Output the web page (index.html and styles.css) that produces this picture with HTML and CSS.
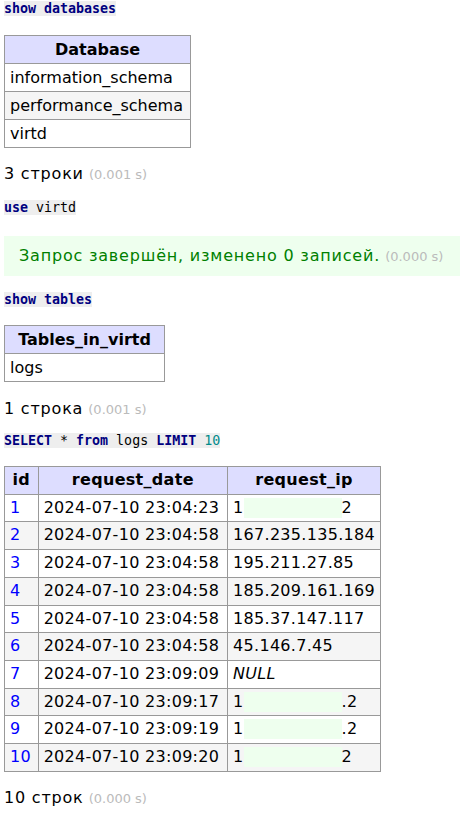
FILE: index.html
```html
<!DOCTYPE html>
<html lang="ru">
<head>
<meta charset="utf-8">
<title>Adminer SQL</title>
<link rel="stylesheet" href="styles.css">
</head>
<body>
<p class="sql first"><code><b class="kw">show</b> <b class="kw">databases</b></code></p>

<table class="grid t-db">
  <thead><tr><th>Database</th></tr></thead>
  <tbody>
    <tr><td>information_schema</td></tr>
    <tr class="odd"><td>performance_schema</td></tr>
    <tr><td>virtd</td></tr>
  </tbody>
</table>
<p class="count"><span class="ru">3 строки</span> <span class="time">(0.001 s)</span></p>

<p class="sql"><code><b class="kw">use</b> virtd</code></p>
<div class="message"><span class="ru">Запрос завершён, изменено 0 записей.</span> <span class="time">(0.000 s)</span></div>

<p class="sql"><code><b class="kw">show</b> <b class="kw">tables</b></code></p>
<table class="grid t-tables">
  <thead><tr><th>Tables_in_virtd</th></tr></thead>
  <tbody>
    <tr><td>logs</td></tr>
  </tbody>
</table>
<p class="count c2"><span class="ru">1 строка</span> <span class="time">(0.001 s)</span></p>

<p class="sql s3"><code><b class="kw">SELECT</b> * <b class="kw">from</b> logs <b class="kw">LIMIT</b> <span class="num">10</span></code></p>
<table class="grid t-logs">
  <thead><tr><th class="c-id">id</th><th class="c-date">request_date</th><th class="c-ip">request_ip</th></tr></thead>
  <tbody>
    <tr><td><a href="#">1</a></td><td>2024-07-10 23:04:23</td><td>1<span class="mask"></span>2</td></tr>
    <tr class="odd"><td><a href="#">2</a></td><td>2024-07-10 23:04:58</td><td>167.235.135.184</td></tr>
    <tr><td><a href="#">3</a></td><td>2024-07-10 23:04:58</td><td>195.211.27.85</td></tr>
    <tr class="odd"><td><a href="#">4</a></td><td>2024-07-10 23:04:58</td><td>185.209.161.169</td></tr>
    <tr><td><a href="#">5</a></td><td>2024-07-10 23:04:58</td><td>185.37.147.117</td></tr>
    <tr class="odd"><td><a href="#">6</a></td><td>2024-07-10 23:04:58</td><td>45.146.7.45</td></tr>
    <tr><td><a href="#">7</a></td><td>2024-07-10 23:09:09</td><td><i>NULL</i></td></tr>
    <tr class="odd"><td><a href="#">8</a></td><td>2024-07-10 23:09:17</td><td>1<span class="mask"></span>.2</td></tr>
    <tr><td><a href="#">9</a></td><td>2024-07-10 23:09:19</td><td>1<span class="mask"></span>.2</td></tr>
    <tr class="odd"><td><a href="#">10</a></td><td>2024-07-10 23:09:20</td><td>1<span class="mask"></span>2</td></tr>
  </tbody>
</table>
<p class="count"><span class="ru">10 строк</span> <span class="time">(0.000 s)</span></p>
</body>
</html>
```
FILE: styles.css
```css
html, body {
  margin: 0;
  background: #fff;
}
body {
  padding: 1px 0 0 4px;
  font-family: "DejaVu Sans", Verdana, sans-serif;
  font-size: 16px;
  line-height: 20px;
  color: #000;
}
.sql {
  margin: 16px 0 0;
  height: 15px;
}
.sql.first { margin-top: 0; }
.sql code {
  display: block;
  width: fit-content;
  font-family: "DejaVu Sans Mono", "Liberation Mono", monospace;
  font-size: 13.3px;
  line-height: 15px;
  background: #eee;
  color: #000;
}
.kw { color: #000080; font-weight: bold; }
.num { color: #008b8b; }

.grid {
  border-collapse: collapse;
  border: 1px solid #999;
  margin-top: 19px;
}
.grid th, .grid td {
  border: 1px solid #999;
  padding: 3px 5px;
  line-height: 21px;
  height: 21px;
  white-space: nowrap;
  text-align: left;
}
.grid th {
  background: #ddf;
  font-weight: bold;
  text-align: center;
}
.grid tr.odd td { background: #f5f5f5; }
.grid a { color: #00f; text-decoration: none; }
.grid i { font-style: italic; }

.t-db { width: 187px; }
.t-tables { width: 161px; margin-top: 18px; }
.t-logs { margin-top: 18px; width: 377px; letter-spacing: 0.3px; }
.t-logs th, .t-logs td { line-height: 20.7px; height: 20.7px; }
.c-id { width: 23px; }
.c-date { width: 179px; }
.c-ip { width: 141px; }

.mask {
  display: inline-block;
  width: 98px;
  height: 20px;
  vertical-align: -5px;
  background: #efe;
}

.ru { letter-spacing: 0.8px; }
.count {
  margin: 16px 0 0;
  height: 20px;
  line-height: 20px;
}
.count.c2 { margin-top: 17px; }
.sql.s3 { margin-top: 14px; }
.time {
  color: #bbb;
  font-size: 13px;
  line-height: 1;
  letter-spacing: 0;
}
.message {
  margin-top: 21px;
  padding: 10px 15px;
  height: 20px;
  line-height: 20px;
  color: green;
  background: #efe;
  white-space: nowrap;
}
```
